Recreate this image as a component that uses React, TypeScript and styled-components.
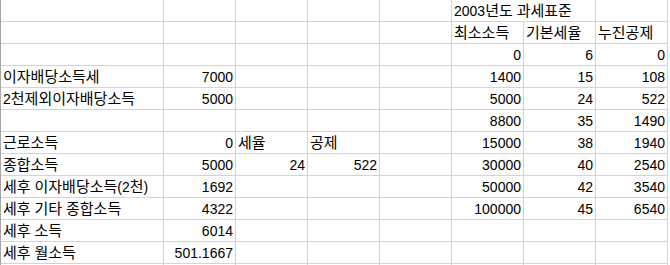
import React from "react";
import styled, { createGlobalStyle } from "styled-components";

const Global = createGlobalStyle`
  html, body { margin: 0; padding: 0; background: #ffffff; overflow: hidden; }
  body {
    font-family: "Noto Sans CJK KR", "Liberation Sans", sans-serif;
    font-size: 15px;
    color: #000000;
    height: 265px;
  }
`;

const Sheet = styled.div`
  display: grid;
  grid-template-columns: 163px repeat(7, 72px);
  grid-auto-rows: 22px;
  width: max-content;
  border-left: 1px solid #a6a6a6;
`;

const Cell = styled.div<{ $align?: "left" | "right"; $spill?: boolean }>`
  box-sizing: border-box;
  height: 22px;
  border-right: ${(p) => (p.$spill ? "1px solid transparent" : "1px solid #d4d4d4")};
  border-bottom: 1px solid #d4d4d4;
  padding: 0 2px;
  line-height: 19px;
  white-space: nowrap;
  overflow: ${(p) => (p.$spill ? "visible" : "hidden")};
  text-align: ${(p) => p.$align ?? "left"};
  position: ${(p) => (p.$spill ? "relative" : "static")};
  z-index: ${(p) => (p.$spill ? 1 : "auto")};
`;

const Latin = styled.span`
  font-family: "Liberation Sans", Arial, sans-serif;
  font-size: 14px;
`;

type CellData = string | number | null | { text: string; spill: boolean };

const rows: CellData[][] = [
  [null, null, null, null, null, { text: "2003년도 과세표준", spill: true }, null, null],
  [null, null, null, null, null, "최소소득", "기본세율", "누진공제"],
  [null, null, null, null, null, 0, 6, 0],
  ["이자배당소득세", 7000, null, null, null, 1400, 15, 108],
  ["2천제외이자배당소득", 5000, null, null, null, 5000, 24, 522],
  [null, null, null, null, null, 8800, 35, 1490],
  ["근로소득", 0, "세율", "공제", null, 15000, 38, 1940],
  ["종합소득", 5000, 24, 522, null, 30000, 40, 2540],
  ["세후 이자배당소득(2천)", 1692, null, null, null, 50000, 42, 3540],
  ["세후 기타 종합소득", 4322, null, null, null, 100000, 45, 6540],
  ["세후 소득", 6014, null, null, null, null, null, null],
  ["세후 월소득", "501.1667", null, null, null, null, null, null],
  [null, null, null, null, null, null, null, null],
];

function renderRuns(s: string) {
  const parts = s.split(/([\x00-\x7F]+)/).filter((p) => p.length > 0);
  return parts.map((p, i) =>
    /^[\x00-\x7F]+$/.test(p) ? <Latin key={i}>{p}</Latin> : <React.Fragment key={i}>{p}</React.Fragment>
  );
}

function isNumeric(v: CellData) {
  if (typeof v === "number") return true;
  if (typeof v === "string") return /^-?\d+(\.\d+)?$/.test(v);
  return false;
}

export default function App() {
  return (
    <>
      <Global />
      <Sheet>
        {rows.map((row, r) =>
          row.map((v, c) => {
            const key = `${r}-${c}`;
            if (v === null) return <Cell key={key} />;
            if (typeof v === "object") {
              return (
                <Cell key={key} $spill={v.spill}>
                  {renderRuns(v.text)}
                </Cell>
              );
            }
            const text = String(v);
            return (
              <Cell key={key} $align={isNumeric(v) ? "right" : "left"}>
                {renderRuns(text)}
              </Cell>
            );
          })
        )}
      </Sheet>
    </>
  );
}
